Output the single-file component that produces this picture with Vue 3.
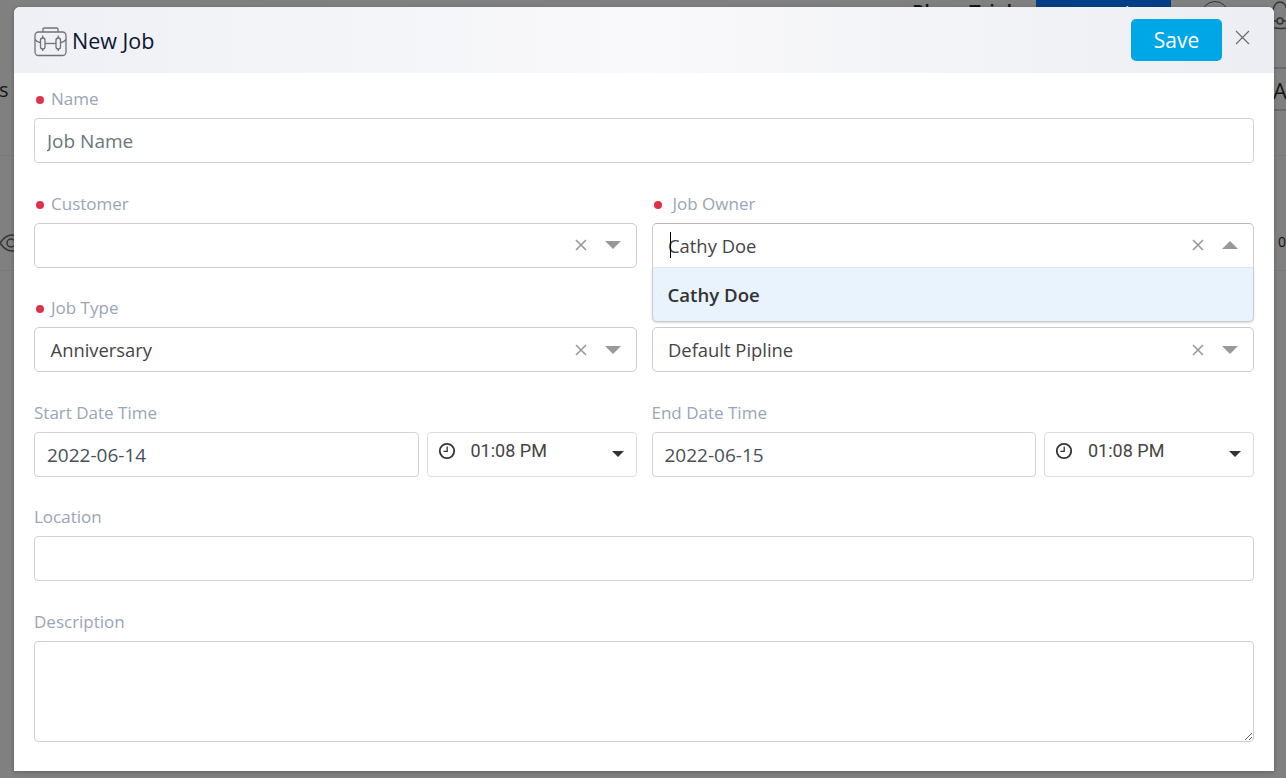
<script setup>
import { ref } from "vue";

const jobName = ref("");
const location = ref("");
const description = ref("");
</script>

<template>
	<div class="backdrop">
		<div class="behind">
			<span class="bg-text bg-plan">Plan Trial</span>
			<span class="bg-upgrade">Upgrade</span>
			<span class="bg-circle"></span>
			<svg class="bg-bell" width="32" height="32" viewBox="0 0 32 32" fill="none" stroke="#333" stroke-width="1.5">
				<path d="M5 26c4-4 3-10 4-16 1-5 4-8 7-8s6 3 7 8c1 6 0 12 4 16" />
				<path d="M3 26c8 3 18 3 26 0" />
				<path d="M6 21h20" />
				<circle cx="16" cy="21" r="3" fill="#808080" />
			</svg>
			<span class="bg-text bg-s">s</span>
			<span class="bg-text bg-al">Al</span>
			<span class="bg-text bg-zero">0</span>
			<svg class="bg-eye" width="24" height="20" viewBox="0 0 24 20" fill="none" stroke="#333" stroke-width="1.5">
				<path d="M1 10c4-6 8-8 12-8s8 2 10 8c-2 6-6 8-10 8s-8-2-12-8z" />
				<circle cx="12" cy="10" r="4" />
			</svg>
			<div class="bg-line strong" style="top: 67px"></div>
			<div class="bg-line strong" style="top: 109px"></div>
			<div class="bg-line" style="top: 155px"></div>
			<div class="bg-line" style="top: 270px"></div>
		</div>

		<div class="modal">
			<header class="modal-head">
				<div class="title">
					<svg class="job-icon" width="33" height="31" viewBox="0 0 33 31" fill="none" stroke="#6f7276" stroke-width="1.3">
						<path d="M9 6V3.200c0-.8.5-1.200 1.200-1.200h12.600c.7 0 1.200.4 1.200 1.200V6" />
						<rect x="1" y="6" width="31" height="23.500" rx="3.500" />
						<path d="M1 13.500c2 2.500 3.500 3 5 3" />
						<path d="M32 13.500c-2 2.500-3.500 3-5 3" />
						<path d="M11 17.500h11" />
						<rect x="6.500" y="12" width="4.500" height="11" rx="2.200" />
						<rect x="22" y="12" width="4.500" height="11" rx="2.200" />
						<path d="M8.700 12V9.500M24.300 12V9.500M8.700 23v2M24.300 23v2" />
					</svg>
					<span>New Job</span>
				</div>
				<div class="head-actions">
					<button class="save-btn" type="button">Save</button>
					<button class="close-btn" type="button" aria-label="Close">
						<svg width="15" height="15" viewBox="0 0 15 15" stroke="#6c6c6c" stroke-width="1.2">
							<path d="M1 1l13 13M14 1L1 14" />
						</svg>
					</button>
				</div>
			</header>

			<form class="form">
				<div class="field full">
					<label class="required">Name</label>
					<input v-model="jobName" class="input" placeholder="Job Name" />
				</div>

				<div class="field">
					<label class="required">Customer</label>
					<div class="select">
						<span class="select-value"></span>
						<svg class="clear" width="12" height="12" viewBox="0 0 12 12" stroke="#999" stroke-width="1.600"><path d="M1 1l10 10M11 1L1 11" /></svg>
						<span class="caret"></span>
					</div>
				</div>

				<div class="field owner">
					<label class="required owner-label">Job Owner</label>
					<div class="select open">
						<span class="select-value"><i class="text-cursor"></i>Cathy Doe</span>
						<svg class="clear" width="12" height="12" viewBox="0 0 12 12" stroke="#999" stroke-width="1.600"><path d="M1 1l10 10M11 1L1 11" /></svg>
						<span class="caret up"></span>
					</div>
					<div class="menu">
						<div class="menu-item">Cathy Doe</div>
					</div>
				</div>

				<div class="field">
					<label class="required">Job Type</label>
					<div class="select">
						<span class="select-value">Anniversary</span>
						<svg class="clear" width="12" height="12" viewBox="0 0 12 12" stroke="#999" stroke-width="1.600"><path d="M1 1l10 10M11 1L1 11" /></svg>
						<span class="caret"></span>
					</div>
				</div>

				<div class="field">
					<label></label>
					<div class="select">
						<span class="select-value">Default Pipline</span>
						<svg class="clear" width="12" height="12" viewBox="0 0 12 12" stroke="#999" stroke-width="1.600"><path d="M1 1l10 10M11 1L1 11" /></svg>
						<span class="caret"></span>
					</div>
				</div>

				<div class="field">
					<label>Start Date Time</label>
					<div class="date-row">
						<div class="input date">2022-06-14</div>
						<div class="time">
							<svg width="18" height="18" viewBox="0 0 18 18" fill="none" stroke="#333" stroke-width="1.800">
								<circle cx="9" cy="9" r="7.200" />
								<path d="M9.200 4.500v4.800H5.500" stroke-width="1.300" />
							</svg>
							<span class="time-text">01:08 PM</span>
							<span class="time-caret"></span>
						</div>
					</div>
				</div>

				<div class="field">
					<label>End Date Time</label>
					<div class="date-row">
						<div class="input date">2022-06-15</div>
						<div class="time">
							<svg width="18" height="18" viewBox="0 0 18 18" fill="none" stroke="#333" stroke-width="1.800">
								<circle cx="9" cy="9" r="7.200" />
								<path d="M9.200 4.500v4.800H5.500" stroke-width="1.300" />
							</svg>
							<span class="time-text">01:08 PM</span>
							<span class="time-caret"></span>
						</div>
					</div>
				</div>

				<div class="field full">
					<label>Location</label>
					<input v-model="location" class="input" />
				</div>

				<div class="field full">
					<label>Description</label>
					<textarea v-model="description" class="input area"></textarea>
				</div>
			</form>
		</div>
	</div>
</template>

<style>
html,
body {
	margin: 0;
	overflow: hidden;
}
</style>

<style scoped>
.backdrop {
	position: relative;
	width: 1286px;
	height: 778px;
	box-sizing: border-box;
	padding: 7px 12px 7px 14px;
	background: #808080;
	overflow: hidden;
	font-family: "Open Sans", "Noto Sans", sans-serif;
}
.behind {
	position: absolute;
	inset: 0;
}
.bg-text {
	position: absolute;
	font-size: 20px;
	line-height: 24px;
	color: #151515;
}
.bg-plan {
	left: 912px;
	top: 0;
	font-weight: 600;
	word-spacing: 10px;
}
.bg-upgrade {
	position: absolute;
	left: 1036px;
	top: -14px;
	width: 135px;
	height: 21px;
	background: #003f87;
	color: #d8d8d8;
	font-size: 18px;
	text-align: center;
	line-height: 54px;
	overflow: hidden;
}
.bg-circle {
	position: absolute;
	left: 1201px;
	top: 1px;
	width: 26px;
	height: 26px;
	border: 1.500px solid #333;
	border-radius: 50%;
}
.bg-circle::after {
	content: "";
	position: absolute;
	left: 12px;
	top: 6px;
	width: 1px;
	height: 14px;
	background: #333;
}
.bg-bell {
	position: absolute;
	left: 1264px;
	top: 0;
}
.bg-s {
	left: -1px;
	top: 78px;
}
.bg-al {
	left: 1273px;
	top: 78px;
	font-size: 22px;
}
.bg-zero {
	left: 1278px;
	top: 230px;
	font-size: 14px;
}
.bg-eye {
	position: absolute;
	left: -1px;
	top: 233px;
}
.bg-line {
	position: absolute;
	left: 0;
	right: 0;
	height: 1px;
	background: #7a7a7a;
}
.bg-line.strong {
	left: 1274px;
	height: 2px;
	background: #6a6a6a;
}
.modal {
	position: relative;
	width: 1260px;
	height: 764px;
	background: #fff;
	border-radius: 6px 6px 0 0;
	box-shadow: 0 1px 4px rgba(0, 0, 0, 0.25);
}
.modal-head {
	height: 66px;
	box-sizing: border-box;
	padding: 0 20px;
	display: flex;
	align-items: center;
	justify-content: space-between;
	border-radius: 6px 6px 0 0;
	background: linear-gradient(90deg, #eef0f5 0%, #f9f9fb 50%, #eceef3 100%);
}
.title {
	display: flex;
	align-items: center;
	gap: 5px;
	font-size: 21.500px;
	font-weight: 500;
	color: #0c1533;
}
.job-icon {
	display: block;
	margin-top: 2px;
}
.head-actions {
	display: flex;
	align-items: center;
}
.save-btn {
	width: 91px;
	height: 42px;
	border: 0;
	border-radius: 5px;
	background: #00a7e6;
	color: #fff;
	font-family: inherit;
	font-size: 21px;
	padding: 0;
}
.close-btn {
	width: 32px;
	height: 32px;
	padding: 0;
	margin-right: -4px;
	margin-left: 4px;
	margin-top: -5px;
	background: none;
	border: 0;
	display: flex;
	align-items: center;
	justify-content: center;
}
.form {
	padding: 14px 20px 0;
	display: grid;
	grid-template-columns: 1fr 1fr;
	column-gap: 15px;
	row-gap: 28.500px;
}
.field {
	min-width: 0;
	position: relative;
}
.full {
	grid-column: 1 / -1;
}
label {
	display: block;
	height: 24px;
	line-height: 24px;
	margin-bottom: 7px;
	font-size: 17px;
	color: #9aa5b5;
}
.required::before {
	content: "";
	display: inline-block;
	width: 8px;
	height: 8px;
	margin: 0 7px 1px 2px;
	border-radius: 50%;
	background: #e0314b;
}
.owner-label::before {
	margin-right: 11px;
}
.input {
	display: block;
	box-sizing: border-box;
	width: 100%;
	height: 45px;
	padding: 0 12px;
	border: 1px solid #ced4da;
	border-radius: 4px;
	background: #fff;
	font-family: inherit;
	font-size: 19px;
	color: #495057;
	outline: none;
}
.input::placeholder {
	color: #6c757d;
	opacity: 1;
}
.area {
	height: 101px;
	padding: 8px 12px;
}
.date {
	display: flex;
	align-items: center;
	flex: 1;
	min-width: 0;
	padding-top: 2px;
}
.select {
	display: flex;
	align-items: center;
	box-sizing: border-box;
	height: 45px;
	padding: 0 15px 0 15.500px;
	border: 1px solid #ccc;
	border-radius: 5px;
	background: #fff;
	font-size: 18.400px;
	color: #444;
}
.select.open {
	position: relative;
	z-index: 3;
	border-color: #b8b8b8 #ccc #e6e6e6;
	border-radius: 5px 5px 0 0;
}
.select-value {
	flex: 1;
	position: relative;
}
.text-cursor {
	position: absolute;
	left: 2px;
	top: -1px;
	width: 1px;
	height: 26px;
	background: #000;
}
.clear {
	margin-right: 18px;
}
.caret {
	width: 0;
	height: 0;
	border-left: 8px solid transparent;
	border-right: 8px solid transparent;
	border-top: 8px solid #999;
}
.caret.up {
	border-top: 0;
	border-bottom: 8px solid #999;
}
.menu {
	position: absolute;
	z-index: 2;
	left: 0;
	right: 0;
	top: 75px;
	box-sizing: border-box;
	height: 55px;
	border: 1px solid #ccc;
	border-top: 0;
	border-radius: 0 0 5px 5px;
	background: #e8f3fd;
	box-shadow: 0 1px 2px rgba(0, 0, 0, 0.15);
}
.menu-item {
	padding-left: 15px;
	line-height: 56px;
	font-size: 18.600px;
	font-weight: 600;
	color: #333;
}
.date-row {
	display: flex;
	gap: 8px;
}
.time {
	flex: none;
	width: 210px;
	height: 45px;
	box-sizing: border-box;
	padding: 0 12px 7px 10px;
	display: flex;
	align-items: center;
	border: 1px solid #ddd;
	border-radius: 4px;
	font-family: "Roboto", sans-serif;
	font-size: 18px;
	color: #444;
}
.time-text {
	flex: 1;
	margin-left: 15px;
}
.time-caret {
	width: 0;
	height: 0;
	margin-top: 7px;
	border-left: 6px solid transparent;
	border-right: 6px solid transparent;
	border-top: 6px solid #333;
}
</style>
